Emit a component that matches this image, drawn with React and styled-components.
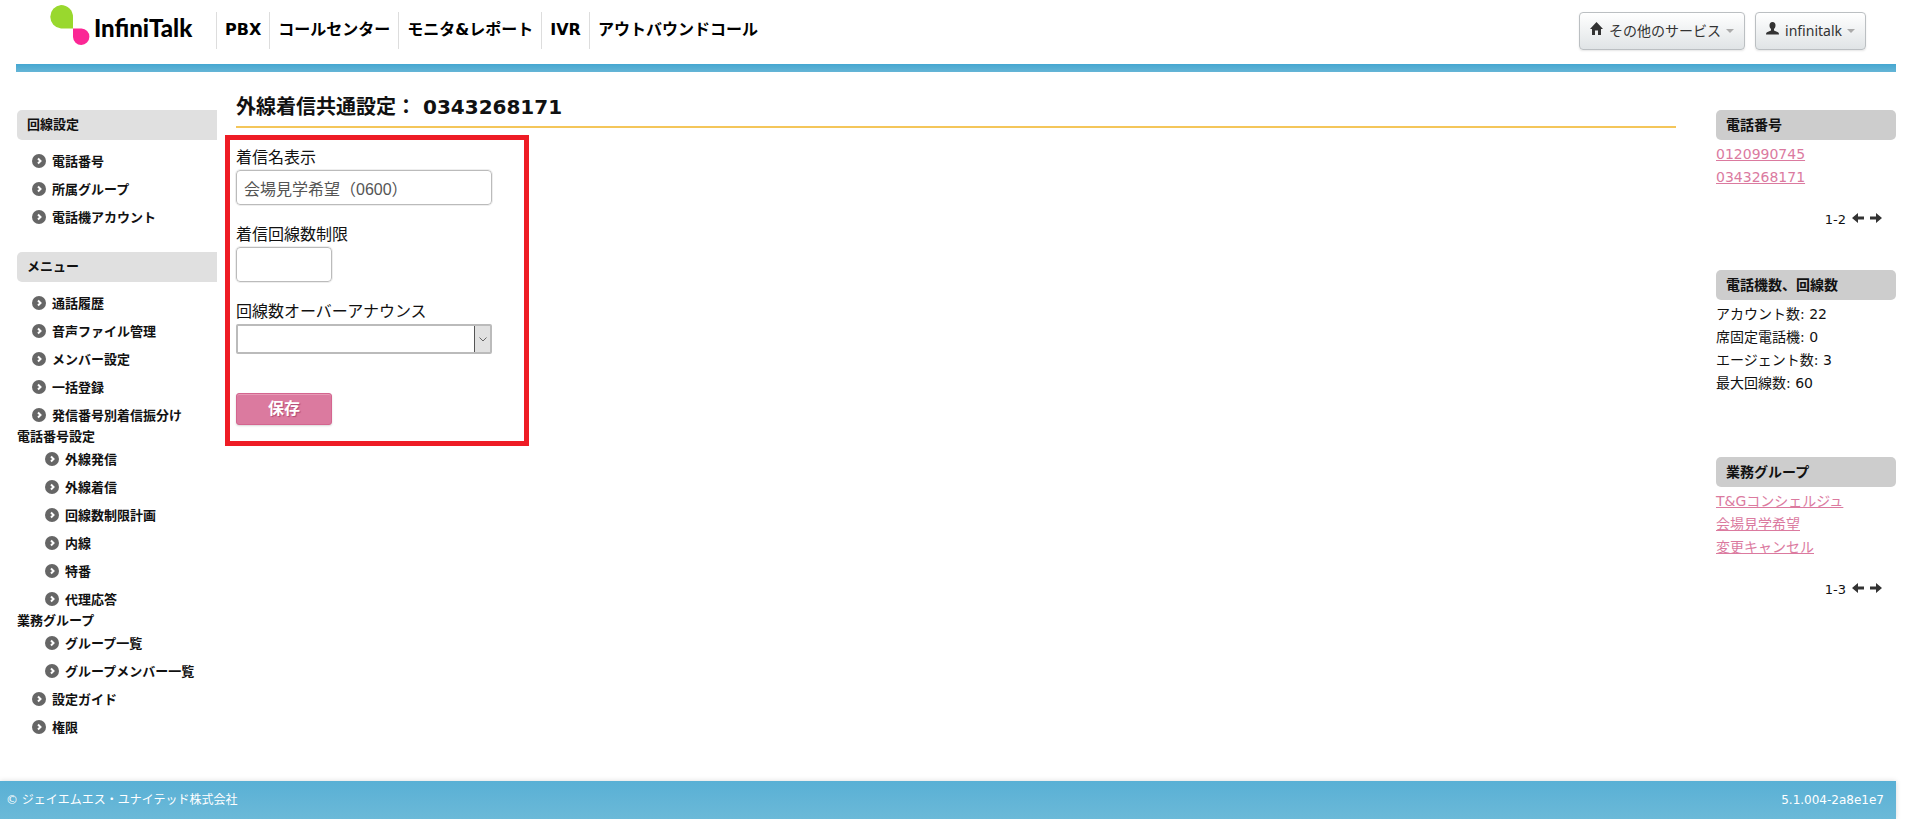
import styled, { createGlobalStyle } from 'styled-components';

const GlobalStyle = createGlobalStyle`
  * {
    box-sizing: border-box;
  }

  body {
    margin: 0;
    background: #fff;
    color: #111;
    font-family: "DejaVu Sans", "Noto Sans CJK JP", sans-serif;
    font-size: 14px;
    line-height: 23px;
  }

  ul,
  h1,
  h2,
  p {
    margin: 0;
    padding: 0;
    list-style: none;
  }

  a {
    color: inherit;
    text-decoration: none;
  }
`;

const Page = styled.div`
  margin-right: 9px;
`;

const Header = styled.header`
  display: flex;
  align-items: flex-start;
  height: 64px;
  padding: 0 30px 0 49px;
`;

const Logo = styled.a`
  display: flex;
  width: 167px;
  padding-top: 5px;
  color: #000;
  font-family: Lato, sans-serif;
  font-size: 24px;
  font-weight: 900;
  line-height: 46px;

  svg {
    margin-right: 4px;
  }
`;

const Nav = styled.nav`
  display: flex;
  flex: 1;
  padding-top: 12px;
`;

const NavLink = styled.a`
  height: 37px;
  padding: 0 8px;
  border-left: 1px solid #ddd;
  color: #000;
  font-size: 16px;
  font-weight: bold;
  line-height: 36px;
  white-space: nowrap;
`;

const Buttons = styled.div`
  display: flex;
  gap: 10px;
  padding-top: 12px;
`;

const MenuButton = styled.button`
  display: flex;
  align-items: center;
  height: 38px;
  padding: 0 10px;
  border: 1px solid #bbbfc2;
  border-radius: 4px;
  background: linear-gradient(#fff, #e0e4e6);
  box-shadow: 0 1px 2px rgba(0, 0, 0, 0.1);
  color: #333;
  font-family: "Noto Sans", "Noto Sans CJK JP", sans-serif;
  font-size: 14px;
  line-height: 36px;
  white-space: nowrap;
`;

const ButtonIcon = styled.svg`
  margin: 0 6px 6px 0;
`;

const Caret = styled.span`
  margin-left: 5px;
  border: 4px solid transparent;
  border-top-color: #aaa;
  border-bottom: 0;
`;

const BlueBar = styled.div`
  height: 8px;
  margin-left: 16px;
  background: linear-gradient(#45a7d1, #65b5d6);
`;

const Columns = styled.div`
  display: flex;
  padding-left: 17px;
`;

const Sidebar = styled.aside`
  width: 200px;
  padding: 38px 0 40px;
  font-size: 13px;
  font-weight: bold;
  color: #111;
`;

const SideTitle = styled.h2`
  height: 30px;
  padding-left: 10px;
  border-radius: 5px 0 0 5px;
  background: #e0e0e0;
  font-size: 13px;
  line-height: 29px;
`;

const SideList = styled.ul`
  padding: ${(p) => p.$pad};
`;

const SideItem = styled.li`
  padding-left: ${(p) => (p.$nested ? 28 : 15)}px;
`;

const SideLink = styled.a`
  display: flex;
  align-items: center;
  height: 28px;
  white-space: nowrap;

  svg {
    flex: none;
    margin-right: 6px;
  }
`;

const SideGroup = styled.li`
  height: 16px;
  line-height: 16px;
`;

const Main = styled.main`
  flex: 1;
  margin: 0 40px 0 8px;
  padding-top: 20px;
`;

const Title = styled.h1`
  height: 36px;
  margin-left: 11px;
  border-bottom: 2px solid #f4c65a;
  font-size: 20px;
  line-height: 30px;
  white-space: pre;
`;

const Form = styled.form`
  display: flex;
  flex-direction: column;
  align-items: flex-start;
  width: 304px;
  margin-top: 7px;
  padding: 6px 6px 16px;
  border: 5px solid #ee1c25;
`;

const Label = styled.label`
  font-size: 16px;
  line-height: 24px;
`;

const TextInput = styled.input`
  width: ${(p) => p.$width}px;
  height: 35px;
  margin-bottom: 18px;
  padding: 0 7px;
  border: 1px solid #bbb;
  border-radius: 4px;
  outline: 1px solid #eee;
  color: #555;
  font-family: "Liberation Sans", "Noto Sans CJK JP", sans-serif;
  font-size: 16px;
`;

const SelectBox = styled.div`
  position: relative;
  width: 256px;
  height: 30px;
  margin-bottom: 39px;
`;

const Select = styled.select`
  width: 100%;
  height: 100%;
  padding: 0 24px 0 8px;
  border: 2px solid #bbb;
  border-radius: 2px;
  background: #fff;
  appearance: none;
  font-size: 16px;
`;

const SelectArrow = styled.span`
  position: absolute;
  top: 2px;
  right: 2px;
  bottom: 2px;
  display: flex;
  align-items: center;
  justify-content: center;
  width: 16px;
  border-left: 1px solid #555;
  background: #e1e1e1;
  pointer-events: none;
`;

const SaveButton = styled.button`
  width: 96px;
  height: 32px;
  padding: 0;
  border: 1px solid #d4658f;
  border-radius: 3px;
  background: #db7a9f;
  box-shadow: inset 0 1px 0 #e79ab6, 0 1px 2px rgba(0, 0, 0, 0.15);
  color: #fff;
  font-family: "DejaVu Sans", "Noto Sans CJK JP", sans-serif;
  font-size: 16px;
  font-weight: bold;
  line-height: 28px;
  text-shadow: 1px 1px 1px #b04a72;
`;

const InfoColumn = styled.aside`
  width: 180px;
  padding-top: 38px;
`;

const InfoSection = styled.section`
  padding-bottom: ${(p) => (p.$paged ? 39 : 62)}px;
`;

const InfoTitle = styled.h2`
  height: 30px;
  margin-bottom: 3px;
  padding-left: 10px;
  border-radius: 5px;
  background: #cdcdcd;
  font-size: 14px;
  line-height: 30px;
`;

const InfoLink = styled.a`
  color: #db7a9f;
  text-decoration: underline;
`;

const Pager = styled.div`
  display: flex;
  align-items: center;
  justify-content: flex-end;
  gap: 6px;
  margin-top: 19px;
  padding-right: 14px;
  font-size: 13px;
`;

const PagerButton = styled.button`
  display: flex;
  padding: 0 0 3px;
  border: 0;
  background: none;
`;

const Footer = styled.footer`
  display: flex;
  align-items: center;
  justify-content: space-between;
  height: 38px;
  padding: 0 12px 0 6px;
  background: linear-gradient(#59b0d5, #6bb9d8);
  box-shadow: 0 0 5px rgba(0, 0, 0, 0.15);
  color: #fff;
  font-size: 12px;
`;

const navItems = ['PBX', 'コールセンター', 'モニタ&レポート', 'IVR', 'アウトバウンドコール'];

const lineItems = ['電話番号', '所属グループ', '電話機アカウント'];

const menuItems = [
  { text: '通話履歴' },
  { text: '音声ファイル管理' },
  { text: 'メンバー設定' },
  { text: '一括登録' },
  { text: '発信番号別着信振分け' },
  { text: '電話番号設定', group: true },
  { text: '外線発信', nested: true },
  { text: '外線着信', nested: true },
  { text: '回線数制限計画', nested: true },
  { text: '内線', nested: true },
  { text: '特番', nested: true },
  { text: '代理応答', nested: true },
  { text: '業務グループ', group: true },
  { text: 'グループ一覧', nested: true },
  { text: 'グループメンバー一覧', nested: true },
  { text: '設定ガイド' },
  { text: '権限' },
];

const infoSections = [
  { title: '電話番号', links: ['0120990745', '0343268171'], range: '1-2' },
  {
    title: '電話機数、回線数',
    lines: ['アカウント数: 22', '席固定電話機: 0', 'エージェント数: 3', '最大回線数: 60'],
  },
  {
    title: '業務グループ',
    links: ['T&Gコンシェルジュ', '会場見学希望', '変更キャンセル'],
    range: '1-3',
  },
];

const LogoMark = () => (
  <svg width="41" height="40" viewBox="0 0 41 40" aria-hidden="true">
    <path d="M12 0A12 12 0 0 1 24 12V23.500H12A11.800 11.800 0 0 1 12 0Z" fill="#99d82e" />
    <path d="M24 23.500H32.500A8.200 8.200 0 1 1 24 32Z" fill="#fb2795" />
  </svg>
);

const Bullet = () => (
  <svg width="14" height="14" viewBox="0 0 14 14" aria-hidden="true">
    <circle cx="7" cy="7" r="7" fill="#666" />
    <path d="M6 4.500L8.500 7L6 9.500" fill="none" stroke="#fff" strokeWidth="2" />
  </svg>
);

const HomeIcon = () => (
  <ButtonIcon width="13" height="13" viewBox="0 0 13 13" aria-hidden="true">
    <path d="M6.500 0L13 7H11V13H8V8.500H5V13H2V7H0Z" fill="#333" />
  </ButtonIcon>
);

const UserIcon = () => (
  <ButtonIcon width="13" height="13" viewBox="0 0 13 13" aria-hidden="true">
    <path
      d="M6.500 0C8.500 0 9.500 1.300 9.500 3.300C9.500 5 8.900 6.200 8 7V8.400L12 10.200Q13 10.700 13 12.500H0Q0 10.700 1 10.200L5 8.400V7C4.100 6.200 3.500 5 3.500 3.300C3.500 1.300 4.500 0 6.500 0Z"
      fill="#333"
    />
  </ButtonIcon>
);

const Arrow = ({ left }) => (
  <svg width="12" height="10" viewBox="0 0 12 10" aria-hidden="true">
    <path
      d={left ? 'M0 5L6 0V3.500H12V6.500H6V10Z' : 'M12 5L6 0V3.500H0V6.500H6V10Z'}
      fill="#333"
    />
  </svg>
);

const MenuLink = ({ text }) => (
  <SideLink href="#">
    <Bullet />
    {text}
  </SideLink>
);

const App = () => {
  return (
    <>
      <GlobalStyle />
      <Page>
        <Header>
          <Logo href="#">
            <LogoMark />
            InfiniTalk
          </Logo>
          <Nav>
            {navItems.map((item) => (
              <NavLink href="#" key={item}>{item}</NavLink>
            ))}
          </Nav>
          <Buttons>
            <MenuButton type="button">
              <HomeIcon />
              その他のサービス
              <Caret />
            </MenuButton>
            <MenuButton type="button">
              <UserIcon />
              infinitalk
              <Caret />
            </MenuButton>
          </Buttons>
        </Header>
        <BlueBar />

        <Columns>
          <Sidebar>
            <SideTitle>回線設定</SideTitle>
            <SideList $pad="7px 0 21px">
              {lineItems.map((text) => (
                <SideItem key={text}>
                  <MenuLink text={text} />
                </SideItem>
              ))}
            </SideList>
            <SideTitle>メニュー</SideTitle>
            <SideList $pad="7px 0 0">
              {menuItems.map(({ text, group, nested }) =>
                group ? (
                  <SideGroup key={text}>{text}</SideGroup>
                ) : (
                  <SideItem key={text} $nested={nested}>
                    <MenuLink text={text} />
                  </SideItem>
                )
              )}
            </SideList>
          </Sidebar>

          <Main>
            <Title>外線着信共通設定： 0343268171</Title>
            <Form>
              <Label htmlFor="name">着信名表示</Label>
              <TextInput id="name" type="text" $width={256} defaultValue="会場見学希望（0600）" />
              <Label htmlFor="limit">着信回線数制限</Label>
              <TextInput id="limit" type="text" $width={96} />
              <Label htmlFor="announce">回線数オーバーアナウンス</Label>
              <SelectBox>
                <Select id="announce">
                  <option value="" />
                </Select>
                <SelectArrow>
                  <svg width="8" height="5" viewBox="0 0 8 5" aria-hidden="true">
                    <path d="M0.500 0.500L4 4L7.500 0.500" fill="none" stroke="#666" />
                  </svg>
                </SelectArrow>
              </SelectBox>
              <SaveButton type="button">保存</SaveButton>
            </Form>
          </Main>

          <InfoColumn>
            {infoSections.map(({ title, links = [], lines = [], range }) => (
              <InfoSection key={title} $paged={Boolean(range)}>
                <InfoTitle>{title}</InfoTitle>
                <ul>
                  {links.map((text) => (
                    <li key={text}>
                      <InfoLink href="#">{text}</InfoLink>
                    </li>
                  ))}
                  {lines.map((text) => (
                    <li key={text}>{text}</li>
                  ))}
                </ul>
                {range && (
                  <Pager>
                    {range}
                    <PagerButton type="button" aria-label="前へ">
                      <Arrow left />
                    </PagerButton>
                    <PagerButton type="button" aria-label="次へ">
                      <Arrow />
                    </PagerButton>
                  </Pager>
                )}
              </InfoSection>
            ))}
          </InfoColumn>
        </Columns>

        <Footer>
          <p>© ジェイエムエス・ユナイテッド株式会社</p>
          <p>5.1.004-2a8e1e7</p>
        </Footer>
      </Page>
    </>
  );
};

export default App;
